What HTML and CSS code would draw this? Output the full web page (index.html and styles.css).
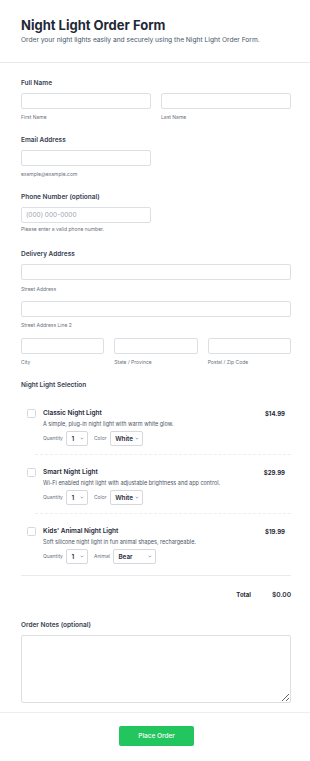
FILE: index.html
```html
<!DOCTYPE html>
<html lang="en">
<head>
<meta charset="utf-8">
<title>Night Light Order Form</title>
<link rel="stylesheet" href="styles.css">
</head>
<body>
<header class="hdr">
  <h1 class="title">Night Light Order Form</h1>
  <p class="subtitle">Order your night lights easily and securely using the Night Light Order Form.</p>
</header>
<form class="form">
  <div class="field">
    <div class="label">Full Name</div>
    <div class="row row-2">
      <div><input class="input" type="text"><div class="hint">First Name</div></div>
      <div><input class="input" type="text"><div class="hint">Last Name</div></div>
    </div>
  </div>
  <div class="field">
    <div class="label">Email Address</div>
    <input class="input input-half" type="email">
    <div class="hint">example@example.com</div>
  </div>
  <div class="field field-phone">
    <div class="label">Phone Number (optional)</div>
    <input class="input input-half" type="tel" placeholder="(000) 000-0000">
    <div class="hint hint-tight">Please enter a valid phone number.</div>
  </div>
  <div class="field">
    <div class="label">Delivery Address</div>
    <input class="input" type="text">
    <div class="hint hint-wide">Street Address</div>
    <input class="input input-next" type="text">
    <div class="hint">Street Address Line 2</div>
    <div class="row row-3 row-next">
      <div><input class="input" type="text"><div class="hint">City</div></div>
      <div><input class="input" type="text"><div class="hint">State / Province</div></div>
      <div><input class="input" type="text"><div class="hint">Postal / Zip Code</div></div>
    </div>
  </div>
  <div class="field field-items">
    <div class="label">Night Light Selection</div>
    <div class="items">
      <div class="item">
        <span class="check"></span>
        <div class="item-body">
          <div class="item-head"><span class="item-name">Classic Night Light</span><span class="price">$14.99</span></div>
          <div class="item-desc">A simple, plug-in night light with warm white glow.</div>
          <div class="opts">
            <div class="opt"><span class="opt-label">Quantity</span><span class="select sel-qty">1<svg class="chev" viewBox="0 0 6 4"><path d="M1 1l2 2 2-2"/></svg></span></div>
            <div class="opt"><span class="opt-label">Color</span><span class="select sel-color">White<svg class="chev" viewBox="0 0 6 4"><path d="M1 1l2 2 2-2"/></svg></span></div>
          </div>
        </div>
      </div>
      <div class="item">
        <span class="check"></span>
        <div class="item-body">
          <div class="item-head"><span class="item-name">Smart Night Light</span><span class="price">$29.99</span></div>
          <div class="item-desc">Wi-Fi enabled night light with adjustable brightness and app control.</div>
          <div class="opts">
            <div class="opt"><span class="opt-label">Quantity</span><span class="select sel-qty">1<svg class="chev" viewBox="0 0 6 4"><path d="M1 1l2 2 2-2"/></svg></span></div>
            <div class="opt"><span class="opt-label">Color</span><span class="select sel-color">White<svg class="chev" viewBox="0 0 6 4"><path d="M1 1l2 2 2-2"/></svg></span></div>
          </div>
        </div>
      </div>
      <div class="item">
        <span class="check"></span>
        <div class="item-body">
          <div class="item-head"><span class="item-name">Kids' Animal Night Light</span><span class="price">$19.99</span></div>
          <div class="item-desc">Soft silicone night light in fun animal shapes, rechargeable.</div>
          <div class="opts">
            <div class="opt"><span class="opt-label">Quantity</span><span class="select sel-qty">1<svg class="chev" viewBox="0 0 6 4"><path d="M1 1l2 2 2-2"/></svg></span></div>
            <div class="opt"><span class="opt-label">Animal</span><span class="select sel-animal">Bear<svg class="chev" viewBox="0 0 6 4"><path d="M1 1l2 2 2-2"/></svg></span></div>
          </div>
        </div>
      </div>
    </div>
    <div class="total"><span class="total-label">Total</span><span class="total-value">$0.00</span></div>
  </div>
  <div class="field field-notes">
    <div class="label">Order Notes (optional)</div>
    <textarea class="notes"></textarea>
  </div>
</form>
<footer class="ftr">
  <button class="btn" type="button">Place Order</button>
</footer>
</body>
</html>
```

FILE: styles.css
```css
* { box-sizing: border-box; }
body {
  margin: 0;
  font-family: Inter, "Noto Sans", sans-serif;
  color: #1f2937;
  background: #fff;
}
.hdr {
  padding: 17px 21px 17px;
  border-bottom: 1px solid #e8eaee;
}
.title {
  margin: 0;
  font-size: 13px;
  line-height: 17px;
  font-weight: 700;
  color: #1f2937;
}
.subtitle {
  margin: 2px 0 0;
  font-size: 6.65px;
  line-height: 9px;
  color: #475569;
}
.form {
  padding: 16px 19px 9px 21px;
}
.field { margin-bottom: 15px; }
.field-phone { margin-bottom: 17px; }
.label {
  font-size: 6.5px;
  line-height: 9px;
  font-weight: 600;
  color: #374151;
  margin-bottom: 5px;
}
.row { display: grid; gap: 10px; }
.row-2 { grid-template-columns: 1fr 1fr; }
.row-3 { grid-template-columns: repeat(3, 1fr); }
.row-next { margin-top: 9px; }
.input {
  display: block;
  width: 100%;
  height: 16px;
  margin: 0;
  border: 1px solid #dcdfe4;
  border-radius: 2px;
  padding: 0 4px;
  font-family: Inter, sans-serif;
  font-size: 6.5px;
  color: #1f2937;
  background: #fff;
  outline: none;
}
.input::placeholder { color: #9ca3af; }
.input-half { width: 130px; }
.input-next { margin-top: 8px; }
.hint {
  font-size: 5px;
  line-height: 7px;
  color: #6b7280;
  margin-top: 5px;
}
.hint-tight { margin-top: 3px; }
.hint-wide { margin-top: 6px; }

.field-items .label { margin-bottom: 6px; }
.items {
  border-bottom: 1px solid #e8eaee;
}
.item {
  display: flex;
  align-items: flex-start;
  margin-left: 14px;
  padding: 13px 6px 8px 0;
  border-bottom: 1px dashed #eceef1;
}
.item:last-child {
  border-bottom: none;
  padding-bottom: 11px;
}
.check {
  flex: none;
  width: 9px;
  height: 9px;
  margin-left: -8px;
  margin-right: 7px;
  border: 1px solid #d5d8dd;
  border-radius: 1.5px;
  background: #fff;
}
.item-body { flex: 1; }
.item-head {
  display: flex;
  justify-content: space-between;
  align-items: center;
  height: 9px;
}
.item-name {
  font-size: 6.5px;
  line-height: 9px;
  font-weight: 600;
  color: #1f2937;
}
.price {
  font-size: 6px;
  line-height: 9px;
  font-weight: 700;
  color: #1f2937;
}
.item-desc {
  margin-top: 2px;
  font-size: 5.5px;
  line-height: 8px;
  color: #4b5563;
}
.opts {
  display: flex;
  align-items: center;
  gap: 5.5px;
  margin-top: 3px;
  height: 15px;
}
.opt {
  display: flex;
  align-items: center;
  gap: 3.5px;
}
.opt-label {
  font-size: 5px;
  line-height: 7px;
  color: #6b7280;
}
.select {
  display: flex;
  align-items: center;
  height: 15px;
  padding: 0 3.5px 0 4px;
  border: 1px solid #d5d8dd;
  border-radius: 2px;
  font-size: 6.3px;
  font-weight: 600;
  color: #1f2937;
}
.sel-qty { width: 22px; }
.sel-color { width: 33px; }
.sel-animal { width: 43px; }
.chev {
  flex: none;
  margin-left: auto;
  width: 4px;
  height: 3px;
  fill: none;
  stroke: #6b7280;
  stroke-width: 0.9;
}
.total {
  display: flex;
  justify-content: flex-end;
  align-items: baseline;
  gap: 21px;
  margin-top: 14px;
  height: 9px;
  line-height: 9px;
}
.total-label {
  font-size: 6px;
  font-weight: 700;
  color: #1f2937;
}
.total-value {
  font-size: 6.6px;
  font-weight: 600;
  color: #1f2937;
}
.field-items { margin-bottom: 22px; }
.field-notes { margin-bottom: 0; }
.notes {
  display: block;
  width: 100%;
  height: 68px;
  margin: 0;
  border: 1px solid #dcdfe4;
  border-radius: 2px;
  font-family: Inter, sans-serif;
  font-size: 6.5px;
  resize: vertical;
  outline: none;
}
.ftr {
  border-top: 1px solid #eceef1;
  padding: 13px 0 16px;
  display: flex;
  justify-content: center;
}
.btn {
  width: 75px;
  height: 20px;
  margin-left: 3px;
  border: none;
  border-radius: 2px;
  background: #22c55e;
  color: #fff;
  font-family: Inter, sans-serif;
  font-size: 6.5px;
  font-weight: 500;
  cursor: pointer;
}
```
